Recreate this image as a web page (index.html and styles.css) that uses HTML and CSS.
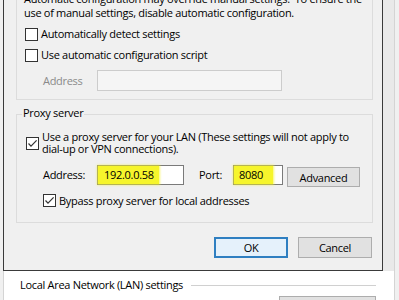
FILE: index.html
```html
<!DOCTYPE html>
<html>
<head>
<meta charset="utf-8">
<title>Local Area Network (LAN) Settings</title>
<link rel="stylesheet" href="styles.css">
</head>
<body>
<div class="tabpage">
  <div class="lan-head"><span>Local Area Network (LAN) settings</span><span class="lan-rule"></span></div>
  <div class="lan-row"><button class="btn lan-btn">LAN settings</button></div>
</div>

<div class="dialog">
  <div class="group auto">
    <p class="note">Automatic configuration may override manual settings.&nbsp; To ensure the<br>use of manual settings, disable automatic configuration.</p>
    <label class="check row-auto1"><span class="box"></span><span>Automatically detect settings</span></label>
    <label class="check row-auto2"><span class="box"></span><span>Use automatic configuration script</span></label>
    <div class="field disabled"><span class="flabel">Address</span><span class="input wide"></span></div>
  </div>

  <div class="group proxy">
    <span class="legend">Proxy server</span>
    <label class="check multi"><span class="box checked"><svg viewBox="0 0 11 11"><polyline points="1.5,5.5 4,8.2 9.6,2.4"/></svg></span><span>Use a proxy server for your LAN (These settings will not apply to<br>dial-up or VPN connections).</span></label>
    <div class="addr-row">
      <span class="flabel">Address:</span>
      <span class="input addr"><span class="hl hl-addr">192.0.0.58</span></span>
      <span class="plabel">Port:</span>
      <span class="input port"><span class="hl hl-port">8080</span></span>
      <button class="btn adv">Advanced</button>
    </div>
    <label class="check bypass"><span class="box checked"><svg viewBox="0 0 11 11"><polyline points="1.5,5.5 4,8.2 9.6,2.4"/></svg></span><span>Bypass proxy server for local addresses</span></label>
  </div>

  <div class="actions">
    <button class="btn ok">OK</button>
    <button class="btn">Cancel</button>
  </div>
</div>
</body>
</html>
```

FILE: styles.css
```css
* { box-sizing: border-box; margin: 0; padding: 0; }
html, body { width: 399px; height: 300px; overflow: hidden; }
body {
  background: #f0f0f0;
  font-family: "Open Sans", "Noto Sans", sans-serif;
  font-size: 11px;
  letter-spacing: -0.3px;
  color: #000;
  position: relative;
}

/* parent window behind the dialog */
.tabpage {
  margin-left: 3px;
  width: 392px;
  height: 300px;
  background: #fff;
  border-left: 1px solid #d4d4d4;
  border-right: 1px solid #d4d4d4;
  padding: 278px 18px 0 16px;
}
.lan-head { display: flex; align-items: center; height: 14px; line-height: 14px; }
.lan-rule { flex: 1; height: 1px; background: #d0d0d0; margin-left: 8px; }
.lan-row { display: flex; justify-content: flex-end; margin-top: 4px; }
.lan-btn { width: 97px; height: 21px; }

/* modal dialog */
.dialog {
  position: absolute;
  left: 3px;
  top: -20px;
  width: 380px;
  height: 291px;
  background: #f0f0f0;
  border: 1px solid #3a3a3a;
  padding: 0 9px 12px 12px;
  display: flex;
  flex-direction: column;
  box-shadow: 11px 0 0 #e9e9e9;
}

.group {
  border: 1px solid #dcdcdc;
  position: relative;
}
.auto { padding: 10px 8px 8px 7px; }
.note { line-height: 14px; }

.check { display: flex; align-items: center; line-height: 14px; }
.row-auto1 { margin-top: 7px; margin-left: 1px; }
.row-auto2 { margin-top: 7px; margin-left: 1px; }
.box {
  width: 13px; height: 13px; flex: none;
  border: 1px solid #333;
  background: #fff;
  margin-right: 3px;
  display: flex; align-items: center; justify-content: center;
}
.box svg { width: 11px; height: 11px; }
.box polyline { fill: none; stroke: #333; stroke-width: 1.2; }

.field { display: flex; align-items: center; margin-top: 8px; margin-left: 19px; height: 21px; }
.flabel { width: 54px; flex: none; }
.disabled .flabel { color: #8a8a8a; }
.input { display: flex; align-items: center; height: 20px; background: #fff; border: 1px solid #7a7a7a; flex: none; }
.input.wide { width: 185px; height: 21px; background: #f5f5f5; border-color: #cccccc; }

.proxy { margin-top: 14px; padding: 16px 8px 15px 9px; }
.legend {
  position: absolute;
  top: -9px; left: 5px;
  padding: 0 1px;
  line-height: 14px;
  background: #f0f0f0;
}
.multi { line-height: 12px; }

.addr-row { display: flex; align-items: flex-start; margin-top: 10px; margin-left: 17px; height: 22px; }
.addr-row .flabel { line-height: 20px; }
.addr { width: 87px; }
.plabel { width: 34px; margin-left: 15px; line-height: 20px; }
.port { width: 50px; }
.hl {
  height: 18px;
  line-height: 18px;
  background: #f6f52c;
  box-shadow: 0 0 2px 1px rgba(246, 245, 44, 0.7);
}
.hl-addr { width: 61px; padding-left: 6px; }
.hl-port { width: 39px; padding-left: 5px; }
.adv { width: 73px; height: 20px; margin-left: 4px; margin-top: 2px; }

.bypass { margin-top: 7px; margin-left: 17px; line-height: 13px; }

.btn {
  font: inherit;
  letter-spacing: inherit;
  color: #000;
  background: #e1e1e1;
  border: 1px solid #adadad;
  display: flex; align-items: center; justify-content: center;
}
.actions { display: flex; justify-content: flex-end; gap: 10px; margin-top: 14px; margin-right: 1px; }
.actions .btn { width: 74px; height: 21px; }
.ok { background: #e5f1fb; border: 2px solid #2f7fc1; }
```
